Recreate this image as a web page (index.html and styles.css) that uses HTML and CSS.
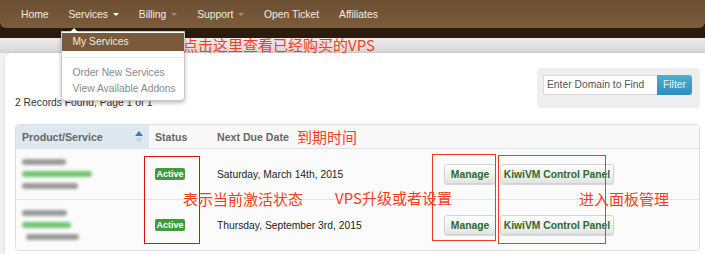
FILE: index.html
```html
<!DOCTYPE html>
<html lang="zh">
<head>
<meta charset="utf-8">
<title>My Services</title>
<link rel="stylesheet" href="styles.css">
</head>
<body>
<div class="topbar">
  <nav class="navbar">
    <a class="nav-item">Home</a>
    <a class="nav-item nav-open">Services <span class="caret caret-white"></span>
      <div class="dropdown">
        <div class="dd-item dd-active">My Services</div>
        <div class="dd-divider"></div>
        <div class="dd-item">Order New Services</div>
        <div class="dd-item">View Available Addons</div>
      </div>
    </a>
    <a class="nav-item">Billing <span class="caret"></span></a>
    <a class="nav-item">Support <span class="caret"></span></a>
    <a class="nav-item">Open Ticket</a>
    <a class="nav-item">Affiliates</a>
  </nav>
</div>
<div class="band"></div>
<main class="main">
  <section class="panel">
    <div class="toprow">
      <div class="records">2 Records Found, Page 1 of 1</div>
      <div class="filterbox">
        <div class="filter-input">Enter Domain to Find</div>
        <div class="filter-btn">Filter</div>
      </div>
    </div>
    <table class="svc-table">
      <thead>
        <tr>
          <th class="col-prod sorted">Product/Service
            <svg class="sort" width="8" height="12" viewBox="0 0 8 12"><path d="M0 5 L4 0 L8 5 Z" fill="#3b78b8"/><path d="M0 7 L8 7 L4 12 Z" fill="#c9d3dc"/></svg>
          </th>
          <th class="col-status">Status</th>
          <th class="col-date">Next Due Date</th>
          <th class="col-act"></th>
        </tr>
      </thead>
      <tbody>
        <tr>
          <td class="col-prod">
            <span class="blur blur-gray w44"></span>
            <span class="blur blur-green w70"></span>
            <span class="blur blur-gray w56"></span>
          </td>
          <td class="col-status"><span class="label">Active</span></td>
          <td class="col-date">Saturday, March 14th, 2015</td>
          <td class="col-act"><span class="btn btn-manage">Manage</span><span class="btn btn-kiwi">KiwiVM Control Panel</span></td>
        </tr>
        <tr>
          <td class="col-prod">
            <span class="blur blur-gray w45"></span>
            <span class="blur blur-green w49"></span>
            <span class="blur blur-gray w53 off4"></span>
          </td>
          <td class="col-status"><span class="label">Active</span></td>
          <td class="col-date">Thursday, September 3rd, 2015</td>
          <td class="col-act"><span class="btn btn-manage">Manage</span><span class="btn btn-kiwi">KiwiVM Control Panel</span></td>
        </tr>
      </tbody>
    </table>
  </section>
</main>

<div class="redbox rb-status"></div>
<div class="redbox rb-manage"></div>
<div class="redbox rb-kiwi"></div>

<div class="note n-click">点击这里查看已经购买的VPS</div>
<div class="note n-due">到期时间</div>
<div class="note n-active">表示当前激活状态</div>
<div class="note n-manage">VPS升级或者设置</div>
<div class="note n-panel">进入面板管理</div>
</body>
</html>
```

FILE: styles.css
```css
* { box-sizing: border-box; }
html, body { margin: 0; padding: 0; }
body {
  width: 705px;
  height: 254px;
  overflow: hidden;
  background: #f2f2f2;
  font-family: "Liberation Sans", Arial, sans-serif;
  font-size: 10.3px;
  color: #333;
  position: relative;
}

/* top navigation */
.topbar {
  background: #2b1b0c;
  padding-bottom: 10px;
}
.navbar {
  height: 28px;
  display: flex;
  align-items: flex-start;
  padding-left: 11px;
  padding-top: 1px;
  background: linear-gradient(#6c4e31, #7b5c3c);
  border-radius: 0 0 6px 6px;
}
.nav-item {
  position: relative;
  color: #f3ece4;
  padding: 0 10px;
  font-size: 10.3px;
  line-height: 28px;
  white-space: nowrap;
}
.caret {
  display: inline-block;
  width: 0; height: 0;
  margin-left: 2px;
  vertical-align: 2px;
  border-left: 3px solid transparent;
  border-right: 3px solid transparent;
  border-top: 3px solid #a28b72;
}
.caret-white { border-top-color: #ffffff; }

/* dropdown */
.dropdown {
  position: absolute;
  left: 3px;
  top: 30px;
  width: 124px;
  height: 70px;
  background: #fff;
  border: 1px solid #c8c8c8;
  border-radius: 0 0 4px 4px;
  box-shadow: 0 2px 4px rgba(0,0,0,0.25);
  padding-top: 1px;
  z-index: 5;
}
.dropdown::before {
  content: "";
  position: absolute;
  left: 8px;
  top: -4px;
  border-left: 4px solid transparent;
  border-right: 4px solid transparent;
  border-bottom: 4px solid #ffffff;
}
.dd-item {
  padding-left: 10px;
  line-height: 16px;
  color: #8a8a8a;
  font-size: 10.3px;
}
.dd-active {
  background: #7a5a3a;
  color: #f1ebe4;
  line-height: 18px;
}
.dd-divider {
  height: 1px;
  background: #e6e6e6;
  margin: 6px 0 7px;
}

/* gray band */
.band {
  height: 15px;
  background: linear-gradient(#ececec, #d6d6d6);
}

/* main panel */
.main {
  padding-left: 5px;
}
.panel {
  background: #fff;
  border-radius: 6px 0 0 0;
  box-shadow: 0 0 3px rgba(0,0,0,0.12);
  padding: 15px 5px 6px 10px;
  height: 201px;
}
.toprow {
  display: flex;
  justify-content: space-between;
  align-items: flex-end;
}
.records {
  font-size: 10.3px;
  color: #333;
  padding-bottom: 0;
}
.filterbox {
  width: 163px;
  height: 40px;
  background: #eeeeee;
  border-radius: 4px;
  padding: 7px 8px 0 6px;
  display: flex;
}
.filter-input {
  width: 114px;
  height: 20px;
  background: #fff;
  border: 1px solid #dcdcdc;
  border-right: none;
  color: #555;
  font-size: 10.3px;
  line-height: 18px;
  padding-left: 3px;
  white-space: nowrap;
}
.filter-btn {
  width: 35px;
  height: 20px;
  background: linear-gradient(#4aaed6, #2f8fbd);
  color: #e8f4fa;
  font-size: 10.3px;
  line-height: 20px;
  text-align: center;
  border-radius: 0 3px 3px 0;
}

/* table */
.svc-table {
  margin-top: 16px;
  width: 685px;
  border: 1px solid #dedede;
  border-radius: 4px;
  border-collapse: separate;
  border-spacing: 0;
  overflow: hidden;
}
.svc-table th {
  height: 24px;
  background: #f8f8f8;
  color: #666;
  font-weight: bold;
  font-size: 10.6px;
  text-align: left;
  border-bottom: 1px solid #e2e2e2;
  padding: 0;
}
.svc-table th.sorted { background: #dde8f0; }
.svc-table td {
  height: 51px;
  background: #fbfbfb;
  border-bottom: 1px solid #e4e4e4;
  padding: 0;
  vertical-align: middle;
  white-space: nowrap;
}
.svc-table tbody tr:last-child td { border-bottom: none; height: 50px; }
.col-prod { width: 133px; padding-left: 6px !important; position: relative; }
.col-status { width: 62px; padding-left: 6px !important; }
.col-date { width: 225px; padding-left: 6px !important; color: #222; }
.col-act { padding-left: 8px !important; }
.sort {
  position: absolute;
  right: 6px;
  top: 6px;
}

.blur {
  display: block;
  height: 6px;
  border-radius: 3px;
  filter: blur(1.4px);
  margin: 6px 0;
}
.blur-gray { background: #9a9a9a; }
.blur-green { background: #74c474; }
.w44 { width: 44px; }
.w70 { width: 70px; }
.w56 { width: 56px; }
.w45 { width: 45px; }
.w49 { width: 49px; }
.w53 { width: 53px; }
.off4 { margin-left: 4px; }

.label {
  display: inline-block;
  width: 30px;
  height: 12px;
  background: #3e9b3e;
  color: #fff;
  font-weight: bold;
  font-size: 9px;
  line-height: 12px;
  text-align: center;
  border-radius: 2px;
}

.btn {
  display: inline-block;
  height: 20px;
  line-height: 19px;
  font-size: 10.3px;
  font-weight: bold;
  color: #2c6a2c;
  text-align: center;
  white-space: nowrap;
  background: linear-gradient(#ffffff, #e4e4e4);
  border: 1px solid #d2d2d2;
  border-radius: 3px;
  box-shadow: 0 1px 1px rgba(0,0,0,0.15);
  vertical-align: middle;
}
.btn-manage { width: 52px; margin-right: 4px; }
.btn-kiwi { width: 114px; }

/* annotations (overlay) */
.redbox {
  position: absolute;
  border: 1px solid #f03c1e;
  z-index: 6;
}
.rb-status { left: 144px; top: 156px; width: 56px; height: 88px; border-color: #e01010; }
.rb-manage { left: 432px; top: 154px; width: 64px; height: 87px; }
.rb-kiwi { left: 498px; top: 155px; width: 108px; height: 89px; }

.note {
  position: absolute;
  font-family: "Noto Sans CJK SC", "Liberation Sans", sans-serif;
  font-size: 15px;
  line-height: 15px;
  color: #f2401f;
  white-space: nowrap;
  z-index: 7;
}
.n-click { left: 183px; top: 37px; }
.n-due { left: 297px; top: 129px; }
.n-active { left: 183px; top: 191px; }
.n-manage { left: 335px; top: 190px; }
.n-panel { left: 579px; top: 191px; }
```
